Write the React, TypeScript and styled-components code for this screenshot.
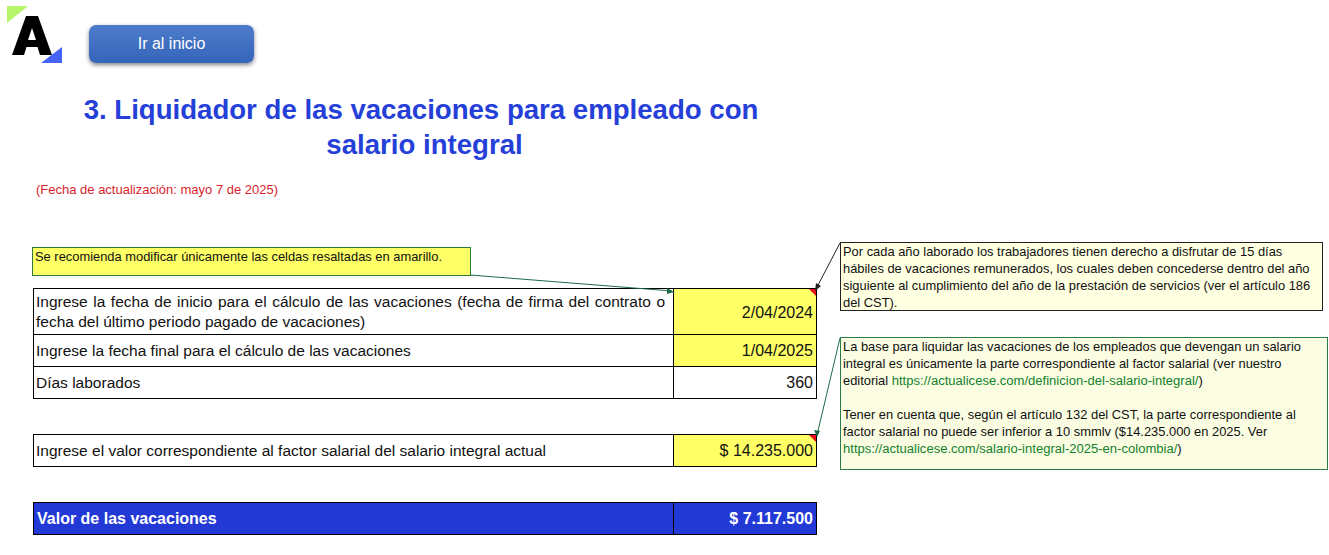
import styled, { createGlobalStyle } from "styled-components";

const GlobalStyle = createGlobalStyle`
  html, body {
    margin: 0;
    padding: 0;
    background: #fff;
    overflow: hidden;
  }
  body {
    font-family: "Liberation Sans", Arial, sans-serif;
  }
`;

const Sheet = styled.div`
  position: relative;
  box-sizing: border-box;
  width: 1329px;
  height: 555px;
  padding: 6px 0 0 8px;
`;

const TopBar = styled.div`
  display: flex;
  align-items: flex-start;
  height: 77px;
`;

const GoHome = styled.button`
  box-sizing: border-box;
  width: 165px;
  height: 38px;
  margin: 19px 0 0 27px;
  padding: 0 0 0 0;
  border: 0;
  border-radius: 7px;
  background: linear-gradient(#4d7ccb, #3565ba);
  box-shadow: 0 2px 4px rgba(50, 50, 70, 0.6);
  color: #fff;
  font: 16px "Liberation Sans", Arial, sans-serif;
`;

const Title = styled.h1`
  width: 826px;
  margin: 9px 0 0;
  color: #2540d8;
  font-size: 27.6px;
  font-weight: bold;
  line-height: 35px;
  text-align: center;
`;

const TitleTail = styled.span`
  margin-left: 7px;
`;

const UpdateDate = styled.div`
  margin: 20px 0 0 28px;
  color: #d81e2c;
  font-size: 13px;
  line-height: 16px;
`;

const Table = styled.div<{ $top: number }>`
  display: grid;
  grid-template-columns: 640px 143px;
  width: 784px;
  box-sizing: border-box;
  margin: ${(p) => p.$top}px 0 0 25px;
  border-top: 1px solid #000;
  border-left: 1px solid #000;
`;

const Cell = styled.div<{ $h: number; $total?: boolean }>`
  box-sizing: border-box;
  display: flex;
  align-items: center;
  height: ${(p) => p.$h}px;
  padding: ${(p) => (p.$total ? "1px 3px 0 3px" : "0 3px 0 2px")};
  border-right: 1px solid #000;
  border-bottom: 1px solid #000;
  background: ${(p) => (p.$total ? "#2239d6" : "#fff")};
  color: ${(p) => (p.$total ? "#fff" : "#111")};
  font-size: ${(p) => (p.$total ? "16px" : "15.5px")};
  font-weight: ${(p) => (p.$total ? "bold" : "normal")};
`;

const WrappedLabel = styled.div`
  box-sizing: border-box;
  height: 46px;
  padding: 3px 8px 0 2px;
  border-right: 1px solid #000;
  border-bottom: 1px solid #000;
  color: #111;
  font-size: 15.5px;
  line-height: 20px;
  text-align: justify;
`;

const ValueCell = styled(Cell)<{ $yellow?: boolean; $flag?: boolean }>`
  position: relative;
  justify-content: flex-end;
  padding: ${(p) => (p.$h > 40 ? "3px" : "1px")} 3px 0 3px;
  font-size: 16px;
  background: ${(p) => (p.$total ? "#2239d6" : p.$yellow ? "#ffff66" : "#fff")};
  &::after {
    content: "";
    display: ${(p) => (p.$flag ? "block" : "none")};
    position: absolute;
    top: 0;
    right: 0;
    border-top: 7px solid #e8101c;
    border-left: 7px solid transparent;
  }
`;

const Note = styled.div<{ $x: number; $y: number; $w: number; $h: number; $bg: string; $line: string }>`
  position: absolute;
  left: ${(p) => p.$x}px;
  top: ${(p) => p.$y}px;
  box-sizing: border-box;
  width: ${(p) => p.$w}px;
  height: ${(p) => p.$h}px;
  padding: 0 2px;
  border: 1px solid ${(p) => p.$line};
  background: ${(p) => p.$bg};
  color: #111;
  font-size: 12.9px;
  line-height: 17px;
  white-space: nowrap;
`;

const Link = styled.span`
  color: #14812c;
  font-size: 13.05px;
`;

const Leaders = styled.svg`
  position: absolute;
  left: 0;
  top: 0;
  pointer-events: none;
`;

const LogoMark = styled.svg`
  display: block;
  flex: none;
  margin-left: -1px;
`;

const App = () => (
  <Sheet>
    <GlobalStyle />
    <TopBar>
      <LogoMark width="55" height="58" viewBox="0 0 55 58">
        <polygon points="0,0 21,0 0,17" fill="#b4f56a" />
        <polygon points="34,57 55,41 55,57" fill="#4763f5" />
        <polygon points="5,49 19,10 31,10 45,49 33,49 30.5,41 19.5,41 17,49" fill="#000" />
        <polygon points="21,34 29,34 25,22" fill="#fff" />
      </LogoMark>
      <GoHome>Ir al inicio</GoHome>
    </TopBar>
    <Title>
      3. Liquidador de las vacaciones para empleado con
      <br />
      <TitleTail>salario integral</TitleTail>
    </Title>
    <UpdateDate>(Fecha de actualización: mayo 7 de 2025)</UpdateDate>

    <Table $top={90}>
      <WrappedLabel>
        Ingrese la fecha de inicio para el cálculo de las vacaciones (fecha de firma del contrato o fecha del último periodo pagado de vacaciones)
      </WrappedLabel>
      <ValueCell $h={46} $yellow $flag>2/04/2024</ValueCell>
      <Cell $h={32}>Ingrese la fecha final para el cálculo de las vacaciones</Cell>
      <ValueCell $h={32} $yellow>1/04/2025</ValueCell>
      <Cell $h={32}>Días laborados</Cell>
      <ValueCell $h={32}>360</ValueCell>
    </Table>

    <Table $top={35}>
      <Cell $h={32}>Ingrese el valor correspondiente al factor salarial del salario integral actual</Cell>
      <ValueCell $h={32} $yellow $flag>$ 14.235.000</ValueCell>
    </Table>

    <Table $top={35}>
      <Cell $h={32} $total>Valor de las vacaciones</Cell>
      <ValueCell $h={32} $total>$ 7.117.500</ValueCell>
    </Table>

    <Leaders width="1329" height="555" viewBox="0 0 1329 555">
      <line x1="470" y1="275" x2="672" y2="291" stroke="#1d6b45" />
      <polygon points="674,292 667,288 667,294" fill="#1d6b45" />
      <line x1="840" y1="243" x2="816" y2="289" stroke="#222" />
      <polygon points="815,291 816,283 821,286" fill="#222" />
      <line x1="840" y1="338" x2="817" y2="435" stroke="#1d6b45" />
      <polygon points="817,437 814,430 820,431" fill="#1d6b45" />
    </Leaders>

    <Note $x={32} $y={247} $w={439} $h={29} $bg="#ffff66" $line="#2d7a3a">
      Se recomienda modificar únicamente las celdas resaltadas en amarillo.
    </Note>
    <Note $x={840} $y={242} $w={483} $h={69} $bg="#ffffe1" $line="#222">
      Por cada año laborado los trabajadores tienen derecho a disfrutar de 15 días
      <br />
      hábiles de vacaciones remunerados, los cuales deben concederse dentro del año
      <br />
      siguiente al cumplimiento del año de la prestación de servicios (ver el artículo 186
      <br />
      del CST).
    </Note>
    <Note $x={840} $y={337} $w={488} $h={133} $bg="#fbfde2" $line="#2d7a4a">
      La base para liquidar las vacaciones de los empleados que devengan un salario
      <br />
      integral es únicamente la parte correspondiente al factor salarial (ver nuestro
      <br />
      editorial <Link>https://actualicese.com/definicion-del-salario-integral/</Link>)
      <br />
      <br />
      Tener en cuenta que, según el artículo 132 del CST, la parte correspondiente al
      <br />
      factor salarial no puede ser inferior a 10 smmlv ($14.235.000 en 2025. Ver
      <br />
      <Link>https://actualicese.com/salario-integral-2025-en-colombia/</Link>)
    </Note>
  </Sheet>
);

export default App;
